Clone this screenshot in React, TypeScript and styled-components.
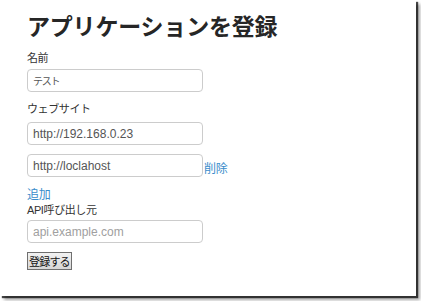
import styled, { createGlobalStyle } from "styled-components";

const GlobalStyle = createGlobalStyle`
  html, body {
    margin: 0;
    padding: 0;
    height: 100%;
    background: #ffffff;
  }
  body {
    font-family: "Liberation Sans", "Noto Sans CJK JP", sans-serif;
    color: #333333;
  }
`;

const Frame = styled.div`
  width: 416px;
  height: 296px;
  box-sizing: border-box;
  background: #ffffff;
  box-shadow: 2px 2px 1px rgba(0, 0, 0, 0.7), 4px 4px 3px rgba(0, 0, 0, 0.35);
  padding: 10px 0 0 27px;
`;

const Title = styled.h1`
  margin: 0 0 10px;
  font-family: "Noto Sans CJK JP", sans-serif;
  font-size: 23px;
  line-height: 30px;
  font-weight: 700;
  color: #262626;
  letter-spacing: -0.2px;
`;

const Group = styled.div`
  display: flex;
  flex-direction: column;
  align-items: flex-start;
`;

const Label = styled.label<{ $gap?: number }>`
  display: block;
  font-family: "Liberation Sans", "Noto Sans CJK JP", sans-serif;
  font-size: 11px;
  line-height: 16px;
  letter-spacing: -0.4px;
  color: #333333;
  margin-bottom: ${(p) => p.$gap ?? 3}px;
`;

const Row = styled.div`
  display: flex;
  align-items: flex-end;
  margin-bottom: 9px;
`;

const Input = styled.input<{ $cjk?: boolean }>`
  box-sizing: border-box;
  width: 176px;
  height: 23px;
  margin: 0;
  padding: 0 5px;
  border: 1px solid #cccccc;
  border-radius: 4px;
  background: #ffffff;
  color: #555555;
  font-family: "Liberation Sans", "Noto Sans CJK JP", sans-serif;
  font-size: ${(p) => (p.$cjk ? "10px" : "12px")};
  letter-spacing: ${(p) => (p.$cjk ? "-1.2px" : "0")};
  outline: none;

  &::placeholder {
    color: #a0a0a0;
  }
`;

const Link = styled.a<{ $inline?: boolean }>`
  display: block;
  font-family: "Noto Sans CJK JP", sans-serif;
  font-size: 12px;
  line-height: 16px;
  letter-spacing: -0.3px;
  color: #3a8ccb;
  text-decoration: none;
  margin-left: ${(p) => (p.$inline ? "1px" : "0")};
  margin-bottom: ${(p) => (p.$inline ? "1px" : "0")};
`;

const Submit = styled.button`
  margin: 0;
  padding: 0 1px;
  height: 18px;
  border: 1px solid #6f6f6f;
  border-radius: 0;
  background: linear-gradient(#f2f2f2, #d6d6d6);
  font-family: "Noto Sans CJK JP", sans-serif;
  font-size: 11px;
  line-height: 14px;
  letter-spacing: -0.8px;
  color: #111111;
`;

export default function App() {
  return (
    <>
      <GlobalStyle />
      <Frame>
        <Title>アプリケーションを登録</Title>
        <Group>
          <Label>名前</Label>
          <Row>
            <Input $cjk defaultValue="テスト" />
          </Row>
          <Label $gap={5}>ウェブサイト</Label>
          <Row>
            <Input defaultValue="http://192.168.0.23" />
          </Row>
          <Row>
            <Input defaultValue="http://loclahost" />
            <Link $inline href="#">削除</Link>
          </Row>
          <Link href="#">追加</Link>
          <Label $gap={2}>API呼び出し元</Label>
          <Row>
            <Input placeholder="api.example.com" />
          </Row>
          <Submit>登録する</Submit>
        </Group>
      </Frame>
    </>
  );
}
